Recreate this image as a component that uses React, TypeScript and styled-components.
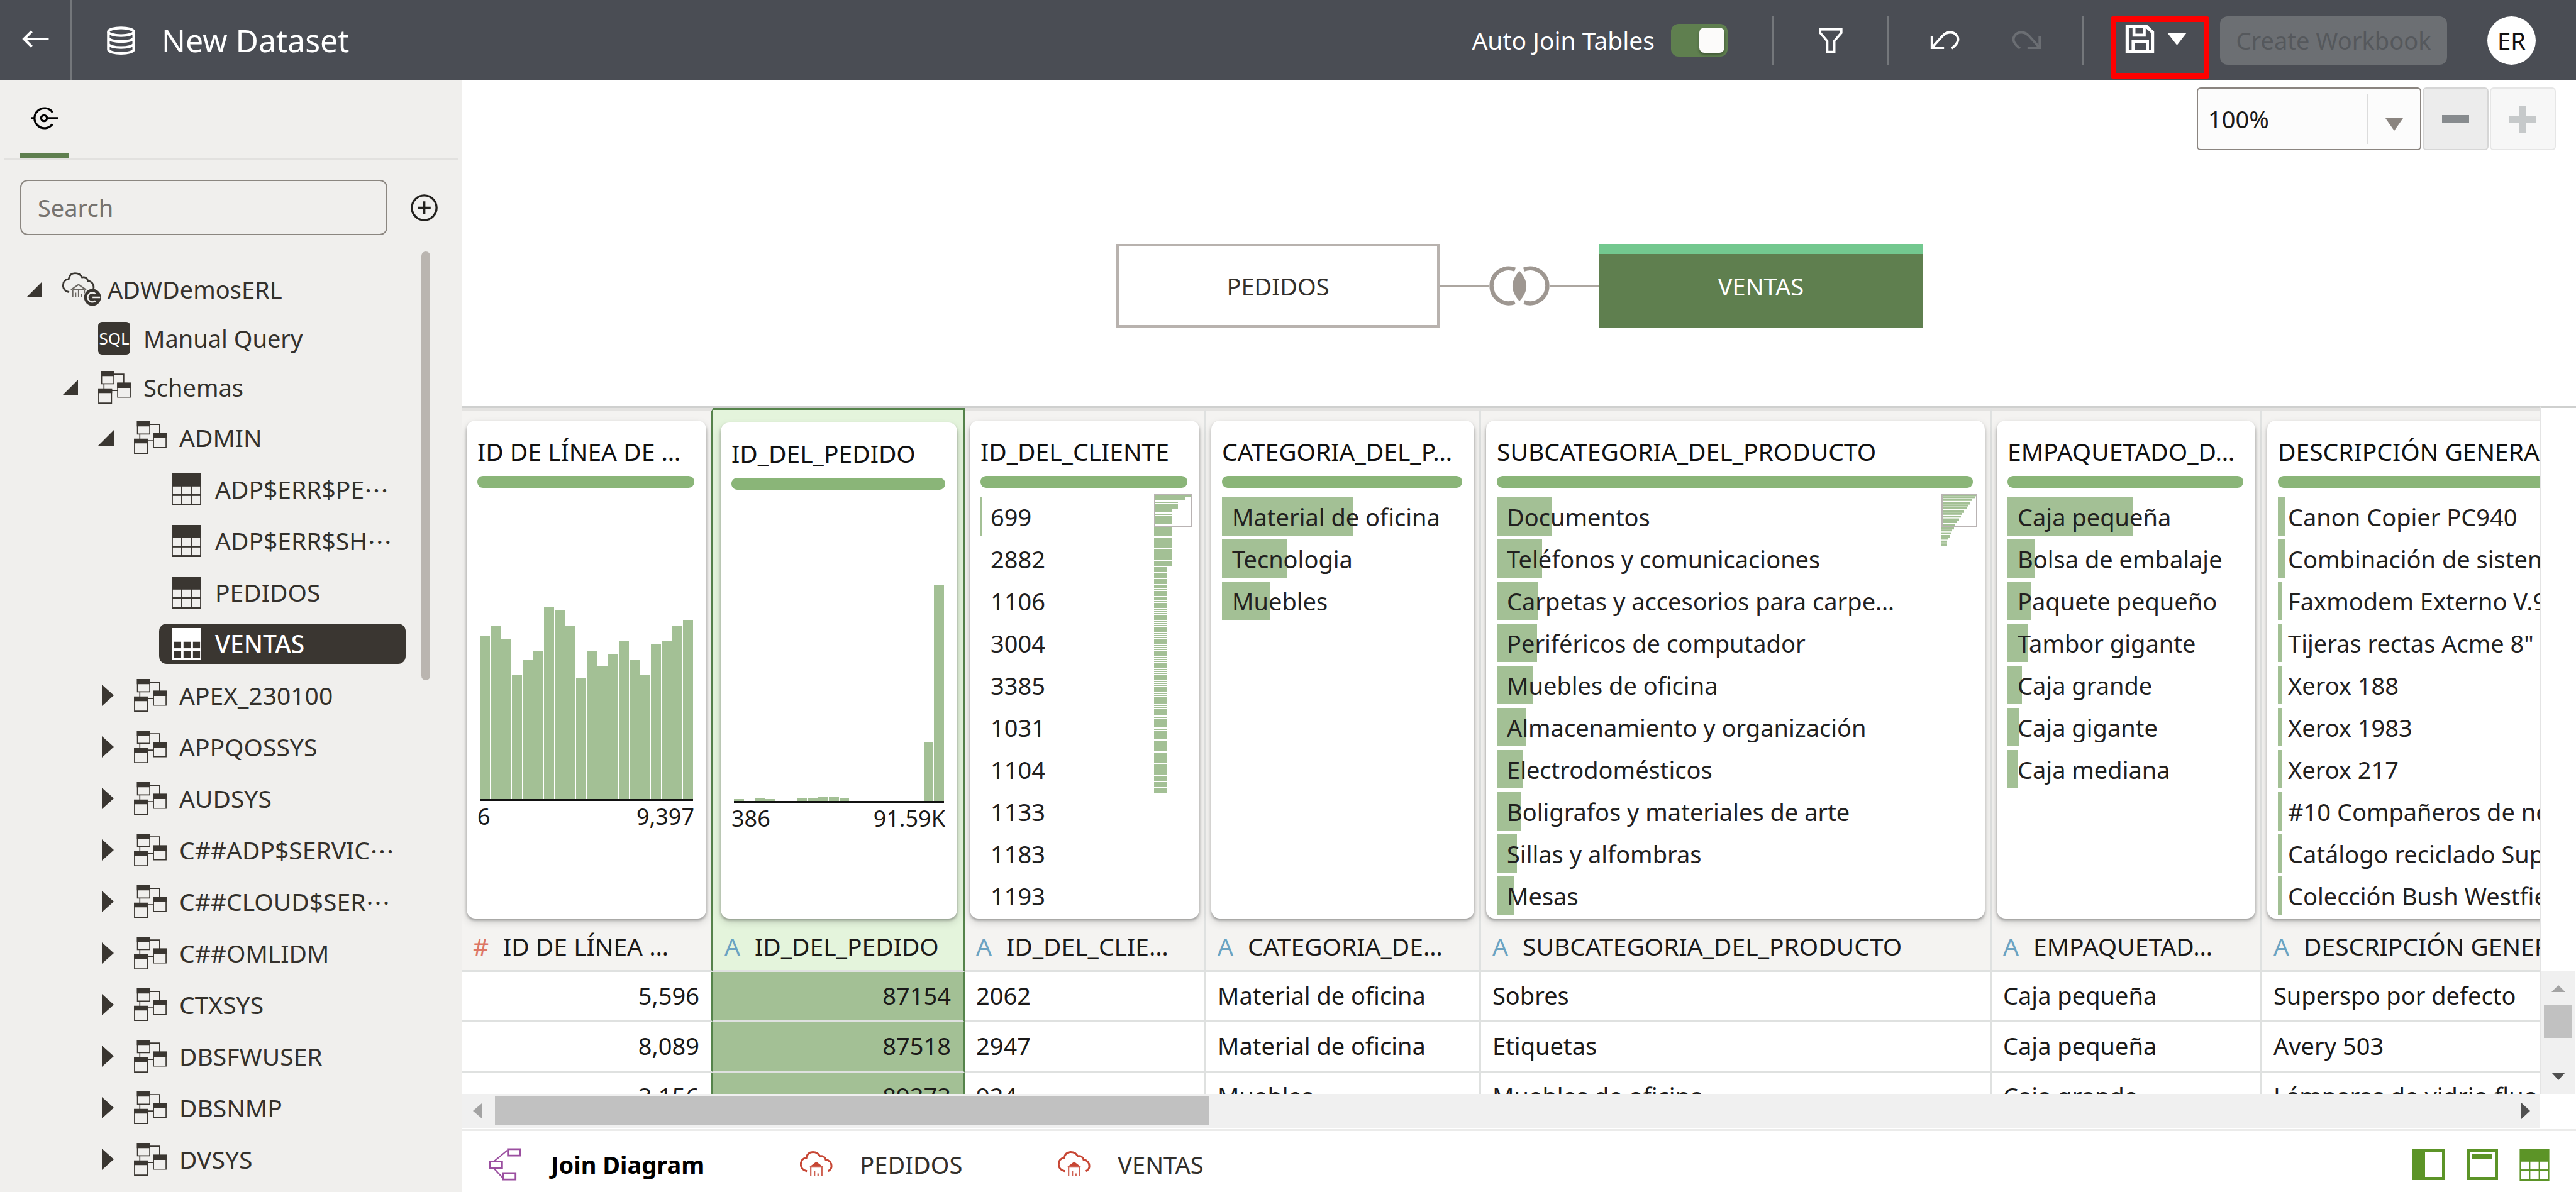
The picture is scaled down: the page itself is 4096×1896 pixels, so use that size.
import React from "react";
import styled, { createGlobalStyle, css } from "styled-components";

const GlobalStyle = createGlobalStyle`
  *, *::before, *::after { box-sizing: border-box; }
  body { margin: 0; font-family: "Noto Sans", "Open Sans", sans-serif; font-size: 38px; line-height: 52px; color: #1b1a19; background: #fff; }
  button, input, select { font: inherit; color: inherit; margin: 0; }
  button { border: 0; padding: 0; background: none; cursor: pointer; }
  ul, h1, h2 { margin: 0; padding: 0; list-style: none; font-weight: 400; }
  svg { display: block; flex: none; }
`;

const Shell = styled.div`
  display: flex;
  flex-direction: column;
  height: 100vh;
  overflow: hidden;
`;

/* ---------- top bar ---------- */

const TopBar = styled.header`
  display: flex;
  align-items: center;
  flex: none;
  height: 128px;
  padding-right: 64px;
  color: #fff;
  background: #4a4d54;
`;

const BackButton = styled.button`
  display: flex;
  align-items: center;
  justify-content: center;
  align-self: stretch;
  width: 114px;
  padding-bottom: 4px;
  border-right: 2px solid #74777b;
`;

const PageTitle = styled.h1`
  display: flex;
  align-items: center;
  gap: 42px;
  margin-right: auto;
  padding-left: 56px;
  font-size: 50px;
  line-height: 70px;
`;

const ToggleLabel = styled.label`
  display: flex;
  align-items: center;
  gap: 26px;
  margin-right: 71px;
  font-size: 39px;
`;

const Toggle = styled.input`
  appearance: none;
  display: flex;
  align-items: center;
  justify-content: flex-end;
  width: 90px;
  height: 52px;
  padding: 0 5px;
  border-radius: 12px;
  background: #5f7f4f;
  &::after {
    content: "";
    width: 40px;
    height: 40px;
    border-radius: 8px;
    background: #fcfbfa;
    box-shadow: 0 3px 4px rgba(0, 0, 0, 0.35);
  }
`;

const Divider = styled.span`
  width: 3px;
  height: 77px;
  background: #74777b;
`;

const BarTools = styled.div`
  display: flex;
  align-items: center;
  justify-content: center;
  gap: 81px;
  width: ${(p: { $wide?: boolean }) => (p.$wide ? 308 : 179)}px;
  height: 77px;
`;

const SaveButton = styled.button`
  position: relative;
  display: flex;
  align-items: center;
  gap: 20px;
  width: 157px;
  height: 77px;
  margin: 0 17px 0 42px;
  padding: 0 0 4px 23px;
  &::after {
    content: "";
    position: absolute;
    inset: 0 0 -22px;
    border: 9px solid #f00;
    border-radius: 4px;
  }
`;

const CreateButton = styled.button`
  width: 361px;
  height: 77px;
  margin-right: 64px;
  border-radius: 12px;
  color: #55585c;
  background: #6c6f73;
`;

const Avatar = styled.button`
  width: 77px;
  height: 77px;
  border-radius: 50%;
  color: #111;
  background: #fff;
`;

/* ---------- sidebar ---------- */

const Body = styled.div`
  display: flex;
  flex: 1;
  min-height: 0;
`;

const Sidebar = styled.aside`
  flex: none;
  width: 734px;
  overflow: hidden;
  background: #f0efed;
`;

const SideTabs = styled.nav`
  height: 126px;
  margin: 0 6px;
  padding-left: 26px;
  border-bottom: 2px solid #e2e1df;
`;

const SideTab = styled.button`
  display: flex;
  align-items: center;
  justify-content: center;
  width: 77px;
  height: 124px;
  padding-top: 4px;
  border-bottom: 9px solid #5f7f4f;
`;

const SearchRow = styled.div`
  display: flex;
  align-items: center;
  gap: 37px;
  padding: 32px 38px 0 32px;
`;

const SearchBox = styled.input`
  flex: 1;
  min-width: 0;
  height: 88px;
  padding: 0 26px;
  border: 2px solid #8b8680;
  border-radius: 12px;
  outline: 0;
  background: transparent;
  &::placeholder { color: #76736f; opacity: 1; }
`;

const TreeArea = styled.div`
  display: flex;
  justify-content: space-between;
  padding: 26px 50px 0 0;
`;

const Tree = styled.ul`
  flex: 1;
  padding-top: 21px;
`;

const TreeRow = styled.li<{ $level: number }>`
  display: flex;
  align-items: center;
  height: ${(p) => (p.$level < 2 ? 78 : 82)}px;
  padding-left: ${(p) => 42 + 57 * p.$level}px;
  color: #34312c;
  font-size: ${(p) => (p.$level < 2 ? 38 : 39)}px;
  white-space: nowrap;
`;

const CaretSlot = styled.span<{ $open?: boolean }>`
  display: flex;
  flex: none;
  width: 57px;
  padding-left: ${(p) => (p.$open ? 0 : 6)}px;
`;

const TreeItem = styled.span<{ $selected?: boolean }>`
  display: flex;
  align-items: center;
  ${(p) =>
    p.$selected &&
    css`
      width: 392px;
      height: 64px;
      margin-left: -17px;
      padding-left: 17px;
      border-radius: 12px;
      color: #fff;
      background: #3a3631;
      font-weight: 500;
    `}
`;

const IconSlot = styled.span<{ $inset?: boolean }>`
  flex: none;
  width: 72px;
  padding-left: ${(p) => (p.$inset ? 3 : 0)}px;
`;

const SqlBadge = styled.span`
  display: block;
  width: 51px;
  height: 52px;
  border-radius: 6px;
  color: #fff;
  background: #3a3631;
  font-size: 26px;
  line-height: 52px;
  text-align: center;
`;

const MidDots = styled.span`
  font-family: "Noto Sans CJK JP", sans-serif;
`;

const TreeScroll = styled.div`
  width: 14px;
  height: 682px;
  border-radius: 7px;
  background: #bab5b0;
`;

/* ---------- canvas ---------- */

const Main = styled.main`
  display: flex;
  flex: 1;
  flex-direction: column;
  min-width: 0;
`;

const Canvas = styled.section`
  flex: none;
  padding: 11px 32px 125px 0;
`;

const ZoomBar = styled.div`
  display: flex;
  justify-content: flex-end;
  gap: 2px;
  margin-bottom: 149px;
`;

const ZoomCombo = styled.div`
  position: relative;
  width: 357px;
`;

const ZoomSelect = styled.select`
  appearance: none;
  width: 100%;
  height: 100px;
  padding: 0 16px;
  border: 2px solid #8b8580;
  border-radius: 6px;
  background: #fcfcfc;
`;

const ComboArrow = styled.span`
  position: absolute;
  top: 10px;
  right: 2px;
  display: flex;
  align-items: center;
  justify-content: center;
  width: 84px;
  height: 80px;
  padding-top: 18px;
  border-left: 2px solid #dcdcdc;
  pointer-events: none;
`;

const ZoomButton = styled.button`
  display: flex;
  align-items: center;
  justify-content: center;
  width: 105px;
  height: 100px;
  border: 2px solid #d6d6d6;
  border-radius: 6px;
  color: #878b8e;
  background: #ececec;
  &:disabled { border-color: #e6e6e6; color: #c6c9ca; background: #f7f7f7; }
`;

const Diagram = styled.div`
  display: flex;
  align-items: center;
  justify-content: center;
  padding-left: 34px;
`;

const TableNode = styled.button<{ $active?: boolean }>`
  width: 514px;
  height: 133px;
  border: 4px solid #b8b2ae;
  color: #33302c;
  background: #fff;
  ${(p) =>
    p.$active &&
    css`
      padding-bottom: 16px;
      border: 0;
      border-top: 16px solid #73c88f;
      color: #fff;
      background: #5f7f4f;
    `}
`;

const Wire = styled.span`
  width: 79px;
  height: 4px;
  background: #aca6a0;
`;

/* ---------- data grid ---------- */

const GridArea = styled.section`
  display: flex;
  flex: 1;
  min-height: 0;
`;

const GridClip = styled.div`
  flex: 1;
  min-width: 0;
  overflow: hidden;
  border-top: 3px solid #cfd0cf;
`;

const DataTable = styled.table`
  table-layout: fixed;
  width: 3762px;
  border-spacing: 0;
`;

const colEdge = css<{ $selected?: boolean; $edge?: string }>`
  border-right: 3px solid ${(p) => (p.$edge === "green" ? "#55834b" : "#dfe1e0")};
`;

const CardCell = styled.td<{ $selected?: boolean; $edge?: string }>`
  height: 822px;
  padding: ${(p) => (p.$selected ? "20px 9px 0 12px" : "15px 8px 0 8px")};
  vertical-align: top;
  border-top: ${(p) => (p.$selected ? "3px solid #55834b" : "5px solid #e3e2e0")};
  background: ${(p) => (p.$selected ? "#e4f4dc" : "#f4f3f1")};
  ${colEdge}
`;

const Card = styled.article<{ $selected?: boolean }>`
  position: relative;
  height: ${(p) => (p.$selected ? 789 : 792)}px;
  padding: 23px 19px 0 17px;
  border-radius: 14px;
  background: #fff;
  box-shadow: 0 3px 4px rgba(0, 0, 0, 0.3), 0 6px 14px rgba(0, 0, 0, 0.14);
`;

const CardTitle = styled.h2`
  font-size: 39px;
  line-height: 52px;
  white-space: nowrap;
  overflow: hidden;
  color: #111;
`;

const QualityBar = styled.div`
  height: 19px;
  margin-top: 13px;
  border-radius: 9px;
  background: #8ab578;
`;

const ValueList = styled.ul`
  display: grid;
  grid-auto-rows: 61px;
  gap: 6px;
  margin-top: 15px;
`;

const Value = styled.li`
  position: relative;
  display: flex;
  align-items: center;
  padding-left: 16px;
  color: #22211f;
  white-space: nowrap;
`;

const ValueBar = styled.span`
  position: absolute;
  top: 0;
  bottom: 0;
  left: 0;
  background: #a3c095;
`;

const ValueText = styled.span`
  position: relative;
`;

const MiniMap = styled.div`
  position: absolute;
  top: 116px;
  right: 12px;
`;

const Histogram = styled.div<{ $selected?: boolean }>`
  display: flex;
  align-items: flex-end;
  gap: 1px;
  height: 498px;
  margin: 0 2px 0 4px;
  border-bottom: 3px solid #111;
`;

const HistBar = styled.span`
  flex: 1;
  background: #a3c095;
`;

const HistLabels = styled.div`
  display: flex;
  justify-content: space-between;
  font-size: 36px;
  line-height: 50px;
`;

const HeadCell = styled.th<{ $selected?: boolean; $edge?: string }>`
  height: 75px;
  padding: 0 0 5px 18px;
  text-align: left;
  font-size: 39px;
  font-weight: 400;
  white-space: nowrap;
  overflow: hidden;
  border-bottom: 3px solid #dfe1e0;
  background: ${(p) => (p.$selected ? "#e4f4dc" : "#f4f3f1")};
  ${colEdge}
`;

const HeadLabel = styled.span`
  display: flex;
`;

const TypeMark = styled.span<{ $number?: boolean }>`
  width: 48px;
  color: ${(p) => (p.$number ? "#dd7665" : "#6ba3c2")};
`;

const Cell = styled.td<{ $selected?: boolean; $edge?: string; $right?: boolean }>`
  height: 80px;
  padding: 0 19px 3px 18px;
  text-align: ${(p) => (p.$right ? "right" : "left")};
  white-space: nowrap;
  overflow: hidden;
  border-bottom: 3px solid #dfe1e0;
  background: ${(p) => (p.$selected ? "#a3c095" : "#fff")};
  ${colEdge}
`;

const VerticalRail = styled.div`
  display: flex;
  flex: none;
  flex-direction: column;
  width: 57px;
  padding-top: 896px;
  border-top: 3px solid #cfd0cf;
  border-left: 2px solid #e4e4e4;
`;

const VerticalTrack = styled.div`
  display: flex;
  flex: 1;
  flex-direction: column;
  align-items: center;
  justify-content: space-between;
  margin-right: 2px;
  padding: 22px 0;
  background: #f0f0f0;
`;

const VerticalThumb = styled.div`
  width: 45px;
  height: 53px;
  margin-bottom: 36px;
  background: #c1c1c1;
`;

const HorizontalTrack = styled.div`
  display: flex;
  flex: none;
  align-items: center;
  height: 54px;
  margin-right: 57px;
  padding: 0 16px 0 18px;
  background: #f0f0f0;
`;

const HorizontalThumb = styled.div`
  width: 1135px;
  height: 46px;
  margin: 0 auto 0 21px;
  background: #c1c1c1;
`;

/* ---------- footer ---------- */

const Footer = styled.footer`
  display: flex;
  align-items: center;
  flex: none;
  height: 102px;
  padding: 14px 42px 0 43px;
  background: linear-gradient(#ebebea, #ebebea) 0 2px / 100% 3px no-repeat #fff;
`;

const FooterTab = styled.button<{ $active?: boolean }>`
  display: flex;
  align-items: center;
  gap: ${(p) => (p.$active ? 47 : 43)}px;
  margin-right: 152px;
  color: ${(p) => (p.$active ? "#000" : "#33302c")};
  font-weight: ${(p) => (p.$active ? 700 : 400)};
`;

const ViewButtons = styled.div`
  display: flex;
  gap: 34px;
  margin-left: auto;
`;

/* ---------- icons ---------- */

const BackIcon = () => (
  <svg width="44" height="28" viewBox="0 0 46 30" fill="none" stroke="#fff" strokeWidth="4.5">
    <path d="M46 15H4M17 2 4 15 17 28" />
  </svg>
);

const DatabaseIcon = () => (
  <svg width="45" height="45" viewBox="0 0 48 48" fill="none" stroke="#fff" strokeWidth="4.5">
    <ellipse cx="24" cy="9" rx="21.5" ry="6.5" />
    <path d="M2.5 9v30c0 9 43 9 43 0V9M2.5 19c0 9 43 9 43 0M2.5 29c0 9 43 9 43 0" />
  </svg>
);

const FunnelIcon = () => (
  <svg width="38" height="42" viewBox="0 0 40 45" fill="none" stroke="#fff" strokeWidth="4">
    <path d="M2 3.5h36V10L26 24v18.500H14V24L2 10Z" />
    <path d="M2 3.500h36" strokeWidth="5" />
  </svg>
);

const UndoIcon = ({ color = "#fff", flip = false }) => (
  <svg width="48" height="30" viewBox="0 0 52 32" fill="none" stroke={color} strokeWidth="4.2">
    <g transform={flip ? "translate(52 0) scale(-1 1)" : undefined}>
      <path d="M3 9v20h21" />
      <path d="M4 28 21 9C28 1 40 0 46 8c5 7 1 15-9 22" />
    </g>
  </svg>
);

const SaveIcon = () => (
  <svg width="47" height="44" viewBox="0 0 49 47" fill="none" stroke="#fff">
    <path d="M3 2.500h33L46 12v32.500H3Z" strokeWidth="5.500" />
    <path d="M14.500 4v13H32V4" strokeWidth="5" />
    <path d="M13 44V27.500h24.500V44" strokeWidth="5" />
  </svg>
);

const DownIcon = ({ color = "#fff", width = 31 }) => (
  <svg width={width} height="20" viewBox="0 0 32 20" preserveAspectRatio="none">
    <path d="M0 0h32L16 20Z" fill={color} />
  </svg>
);

const ConnectIcon = () => (
  <svg width="43" height="36" viewBox="0 0 46 38" fill="none" stroke="#000" strokeWidth="3.600">
    <path d="M37 9A17 17 0 1 0 37 29" />
    <circle cx="22.500" cy="19" r="5" />
    <path d="M28 19h18M0 19h6" strokeWidth="4" />
  </svg>
);

const AddIcon = () => (
  <svg width="43" height="43" viewBox="0 0 46 46" fill="none" stroke="#22201d">
    <circle cx="23" cy="23" r="21" strokeWidth="3.600" />
    <path d="M23 12v22M12 23h22" strokeWidth="4" />
  </svg>
);

const OpenCaret = () => (
  <svg width="25" height="25" viewBox="0 0 25 25">
    <path d="M25 0v25H0Z" fill="#3a3631" />
  </svg>
);

const ClosedCaret = () => (
  <svg width="19" height="34" viewBox="0 0 19 34">
    <path d="M0 0 19 17 0 34Z" fill="#3a3631" />
  </svg>
);

const cloudPath =
  "M12 34C5 33 1 28 1.500 22 1.500 16 5 12 11 11.500 12 5 16 1.500 22 1.500c6 0 10 3 12 7 5-1 9 1 10 6 6 1 10 5 10 11 0 4-2 7-6 8.500";

const WarehouseCloud = () => (
  <svg width="62" height="54" viewBox="0 0 67 58" fill="none">
    <path d={cloudPath} stroke="#3a3631" strokeWidth="3" />
    <path d="M15 30 28 21l13 9" stroke="#6b6762" strokeWidth="2.500" />
    <path d="M18 43V30M23 43v-8M28 43v-12M33 43v-6M38 36v-6M18 29h20" stroke="#6b6762" strokeWidth="2.200" />
    <circle cx="52" cy="43" r="14.500" fill="#3a3631" />
    <path d="M57 37a8 8 0 1 0 0 12M52 43h13" stroke="#f0efed" strokeWidth="2.600" />
  </svg>
);

const RedCloud = () => (
  <svg width="52" height="42" viewBox="0 0 56 45" fill="none">
    <path d={cloudPath} stroke="#c74634" strokeWidth="3.200" />
    <path d="M15 28 28 18l13 10Z" fill="#c74634" />
    <path d="M18.500 43V27h19v16M25 43v-9M31 43v-5" stroke="#cf6152" strokeWidth="2.400" />
  </svg>
);

const SchemaIcon = () => (
  <svg width="52" height="52" viewBox="0 0 56 56" fill="none" stroke="#3a3631" strokeWidth="1.800">
    <path d="M6 1h21v21H6ZM33.500 21H55v24H33.500ZM1 31h22v24H1ZM27 5.500h17V21M10 22v9M23 33.500h11" />
    <path d="M5 0h23v9H5ZM32.500 20H56v9H32.500ZM0 30h24v8H0Z" fill="#3a3631" stroke="none" />
  </svg>
);

const TableIcon = ({ ink = "#3a3631", paper = "#f0efed", width = 47, cells = 0 }) => (
  <svg width={width} height="51" viewBox="0 0 50 54">
    <path d="M0 0h50v54H0Z" fill={ink} />
    {[2, 18, 34].map((x) =>
      [22, 38].map((y) => (
        <rect key={x + "-" + y} x={x + cells} y={y + cells / 2} width={14 - cells} height={13 - cells} fill={paper} />
      ))
    )}
  </svg>
);

const VennIcon = () => (
  <svg width="96" height="63" viewBox="0 0 104 67" fill="none" stroke="#9e9791" strokeWidth="7">
    <path d="M44.500 5.500A30 30 0 1 0 44 61.800" />
    <path d="M59.500 5.500A30 30 0 1 1 60 61.800" />
    <path d="M52 8C68 25 68 43 52 60 36 43 36 25 52 8Z" fill="#9e9791" stroke="none" />
  </svg>
);

const JoinIcon = () => (
  <svg width="52" height="53" viewBox="0 0 56 57" fill="none" stroke="#9b4fa0" strokeWidth="3">
    <path d="M33 2h21v11H33ZM2 23h21v11H2ZM25 43h21v11H25Z" />
    <path d="M9 23 32 4M8 34l17 18" strokeWidth="2.400" />
  </svg>
);

const LeftPaneIcon = () => (
  <svg width="52" height="50" viewBox="0 0 52 50">
    <path d="M0 0h52v50H0Z" fill="#5c9427" />
    <path d="M20 5h27v40H20Z" fill="#fff" />
  </svg>
);

const TopPaneIcon = () => (
  <svg width="50" height="50" viewBox="0 0 50 50">
    <path d="M0 0h50v50H0Z" fill="#5c9427" />
    <path d="M5 5h40v40H5Z" fill="#fff" />
    <path d="M9 9h32v8H9Z" fill="#5c9427" />
  </svg>
);

const ArrowHead = ({ d, w, h, color }: { d: string; w: number; h: number; color: string }) => (
  <svg width={w} height={h} viewBox={`0 0 ${w} ${h}`}>
    <path d={d} fill={color} />
  </svg>
);

const green = "#a3c095";

const ClientMiniMap = () => {
  const stripes = [];
  for (let y = 22; y < 478; y += 19) {
    const w = y < 110 ? 29 : 21;
    stripes.push(`M0 ${y}h${w}v8H0ZM0 ${y + 10}h${w}v2H0ZM0 ${y + 13}h${w}v2H0ZM0 ${y + 16}h${w}v2H0Z`);
  }
  return (
    <svg width="60" height="482" viewBox="0 0 60 482">
      <path d="M0 0h58v6H49v5H0ZM0 13h38v2H0ZM0 16h38v2H0ZM0 19h38v6H0Z" fill={green} />
      <path d={stripes.join("")} fill={green} />
      <rect x="1" y="1" width="58" height="52" fill="none" stroke="#b9b3b3" strokeWidth="2" />
    </svg>
  );
};

const SubcategoryMiniMap = () => {
  const widths = [56, 54, 48, 46, 43, 40, 36, 33, 31, 28, 25, 22, 20, 17, 15, 13, 11, 9, 9];
  return (
    <svg width="57" height="84" viewBox="0 0 57 84">
      {widths.map((w, i) => (
        <rect key={i} x="0" y={i * 4.4} width={w} height={i % 3 === 0 ? 4.4 : 3} fill={green} />
      ))}
      <rect x="1" y="1" width="55" height="52" fill="none" stroke="#b9b3b3" strokeWidth="2" />
    </svg>
  );
};

/* ---------- data ---------- */

type Kind = "cloud" | "sql" | "schema" | "table";
type Node = { level: number; kind: Kind; text: string; open?: boolean; cut?: boolean; selected?: boolean };

const tree: Node[] = [
  { level: 0, kind: "cloud", text: "ADWDemosERL", open: true },
  { level: 1, kind: "sql", text: "Manual Query" },
  { level: 1, kind: "schema", text: "Schemas", open: true },
  { level: 2, kind: "schema", text: "ADMIN", open: true },
  { level: 3, kind: "table", text: "ADP$ERR$PE", cut: true },
  { level: 3, kind: "table", text: "ADP$ERR$SH", cut: true },
  { level: 3, kind: "table", text: "PEDIDOS" },
  { level: 3, kind: "table", text: "VENTAS", selected: true },
  { level: 2, kind: "schema", text: "APEX_230100" },
  { level: 2, kind: "schema", text: "APPQOSSYS" },
  { level: 2, kind: "schema", text: "AUDSYS" },
  { level: 2, kind: "schema", text: "C##ADP$SERVIC", cut: true },
  { level: 2, kind: "schema", text: "C##CLOUD$SER", cut: true },
  { level: 2, kind: "schema", text: "C##OMLIDM" },
  { level: 2, kind: "schema", text: "CTXSYS" },
  { level: 2, kind: "schema", text: "DBSFWUSER" },
  { level: 2, kind: "schema", text: "DBSNMP" },
  { level: 2, kind: "schema", text: "DVSYS" },
];

type Column = {
  width: number;
  title: string;
  head: string;
  number?: boolean;
  right?: boolean;
  selected?: boolean;
  edge?: string;
  values?: [string, number][];
  bars?: number[];
  range?: [string, string];
  map?: React.ReactNode;
  rows: string[];
};

const columns: Column[] = [
  {
    width: 400, title: "ID DE LÍNEA DE …", head: "ID DE LÍNEA …", number: true, right: true, edge: "green",
    bars: [260, 275, 255, 197, 221, 236, 305, 300, 275, 192, 236, 211, 231, 251, 221, 197, 246, 251, 275, 285],
    range: ["6", "9,397"], rows: ["5,596", "8,089", "3,156"],
  },
  {
    width: 400, title: "ID_DEL_PEDIDO", head: "ID_DEL_PEDIDO", right: true, selected: true, edge: "green",
    bars: [3, 0, 5, 3, 0, 0, 4, 5, 6, 7, 4, 0, 0, 0, 0, 0, 0, 0, 94, 344],
    range: ["386", "91.59K"], rows: ["87154", "87518", "89373"],
  },
  {
    width: 384, title: "ID_DEL_CLIENTE", head: "ID_DEL_CLIE…", map: <ClientMiniMap />,
    values: [["699", 2], ["2882", 0], ["1106", 0], ["3004", 0], ["3385", 0], ["1031", 0], ["1104", 0], ["1133", 0], ["1183", 0], ["1193", 0]],
    rows: ["2062", "2947", "924"],
  },
  {
    width: 437, title: "CATEGORIA_DEL_P…", head: "CATEGORIA_DE…",
    values: [["Material de oficina", 208], ["Tecnologia", 103], ["Muebles", 77]],
    rows: ["Material de oficina", "Material de oficina", "Muebles"],
  },
  {
    width: 812, title: "SUBCATEGORIA_DEL_PRODUCTO", head: "SUBCATEGORIA_DEL_PRODUCTO", map: <SubcategoryMiniMap />,
    values: [
      ["Documentos", 88], ["Teléfonos y comunicaciones", 72], ["Carpetas y accesorios para carpe…", 66],
      ["Periféricos de computador", 64], ["Muebles de oficina", 58], ["Almacenamiento y organización", 47],
      ["Electrodomésticos", 41], ["Boligrafos y materiales de arte", 38], ["Sillas y alfombras", 32], ["Mesas", 28],
    ],
    rows: ["Sobres", "Etiquetas", "Muebles de oficina"],
  },
  {
    width: 430, title: "EMPAQUETADO_D…", head: "EMPAQUETAD…",
    values: [
      ["Caja pequeña", 200], ["Bolsa de embalaje", 44], ["Paquete pequeño", 38], ["Tambor gigante", 32],
      ["Caja grande", 23], ["Caja gigante", 19], ["Caja mediana", 17],
    ],
    rows: ["Caja pequeña", "Caja pequeña", "Caja grande"],
  },
  {
    width: 899, title: "DESCRIPCIÓN GENERAL", head: "DESCRIPCIÓN GENERAL",
    values: [
      ["Canon Copier PC940", 11], ["Combinación de sistemas", 11], ["Faxmodem Externo V.90", 7],
      ['Tijeras rectas Acme 8"', 7], ["Xerox 188", 7], ["Xerox 1983", 7], ["Xerox 217", 7],
      ["#10 Compañeros de notas", 7], ["Catálogo reciclado Super", 7], ["Colección Bush Westfield", 7],
    ],
    rows: ["Superspo por defecto", "Avery 503", "Lámparas de vidrio fluorescente"],
  },
];

const NodeIcon = ({ node }: { node: Node }) => {
  if (node.kind === "cloud") return <WarehouseCloud />;
  if (node.kind === "sql") return <SqlBadge>SQL</SqlBadge>;
  if (node.kind === "schema") return <SchemaIcon />;
  return node.selected ? <TableIcon ink="#fff" paper="#3a3631" cells={2} /> : <TableIcon />;
};

const ColumnCard = ({ column }: { column: Column }) => (
  <Card $selected={column.selected}>
    <CardTitle>{column.title}</CardTitle>
    <QualityBar />
    {column.bars && (
      <>
        <Histogram>
          {column.bars.map((h, i) => (
            <HistBar key={i} style={{ height: h }} />
          ))}
        </Histogram>
        <HistLabels>
          <span>{column.range![0]}</span>
          <span>{column.range![1]}</span>
        </HistLabels>
      </>
    )}
    {column.values && (
      <ValueList>
        {column.values.map(([text, w]) => (
          <Value key={text}>
            <ValueBar style={{ width: w }} />
            <ValueText>{text}</ValueText>
          </Value>
        ))}
      </ValueList>
    )}
    {column.map && <MiniMap>{column.map}</MiniMap>}
  </Card>
);

export default function App() {
  return (
    <Shell>
      <GlobalStyle />
      <TopBar>
        <BackButton aria-label="Back"><BackIcon /></BackButton>
        <PageTitle><DatabaseIcon />New Dataset</PageTitle>
        <ToggleLabel>
          Auto Join Tables
          <Toggle type="checkbox" defaultChecked />
        </ToggleLabel>
        <Divider />
        <BarTools>
          <button aria-label="Filter"><FunnelIcon /></button>
        </BarTools>
        <Divider />
        <BarTools $wide>
          <button aria-label="Undo"><UndoIcon /></button>
          <button aria-label="Redo" disabled><UndoIcon color="#6b6e73" flip /></button>
        </BarTools>
        <Divider />
        <SaveButton aria-label="Save"><SaveIcon /><DownIcon /></SaveButton>
        <CreateButton disabled>Create Workbook</CreateButton>
        <Avatar>ER</Avatar>
      </TopBar>
      <Body>
        <Sidebar>
          <SideTabs>
            <SideTab aria-label="Connections"><ConnectIcon /></SideTab>
          </SideTabs>
          <SearchRow>
            <SearchBox type="text" placeholder="Search" aria-label="Search" />
            <button aria-label="Add"><AddIcon /></button>
          </SearchRow>
          <TreeArea>
            <Tree>
              {tree.map((node) => (
                <TreeRow key={node.text} $level={node.level}>
                  <CaretSlot $open={node.open}>
                    {node.open ? <OpenCaret /> : node.kind === "schema" ? <ClosedCaret /> : null}
                  </CaretSlot>
                  <TreeItem $selected={node.selected}>
                    <IconSlot $inset={node.kind === "table"}><NodeIcon node={node} /></IconSlot>
                    {node.text}
                    {node.cut && <MidDots>…</MidDots>}
                  </TreeItem>
                </TreeRow>
              ))}
            </Tree>
            <TreeScroll />
          </TreeArea>
        </Sidebar>
        <Main>
          <Canvas>
            <ZoomBar>
              <ZoomCombo>
                <ZoomSelect aria-label="Zoom" defaultValue="100%">
                  <option>100%</option>
                </ZoomSelect>
                <ComboArrow><DownIcon color="#8b8580" width={28} /></ComboArrow>
              </ZoomCombo>
              <ZoomButton aria-label="Zoom out">
                <svg width="43" height="43" viewBox="0 0 43 43"><path d="M0 15h43v12H0Z" fill="currentColor" /></svg>
              </ZoomButton>
              <ZoomButton aria-label="Zoom in" disabled>
                <svg width="43" height="43" viewBox="0 0 43 43"><path d="M16 0h11v16h16v11H27v16H16V27H0V16h16Z" fill="currentColor" /></svg>
              </ZoomButton>
            </ZoomBar>
            <Diagram>
              <TableNode>PEDIDOS</TableNode>
              <Wire />
              <VennIcon />
              <Wire />
              <TableNode $active>VENTAS</TableNode>
            </Diagram>
          </Canvas>
          <GridArea>
            <GridClip>
              <DataTable>
                <colgroup>
                  {columns.map((c) => <col key={c.head} style={{ width: c.width }} />)}
                </colgroup>
                <thead>
                  <tr>
                    {columns.map((c) => (
                      <CardCell key={c.head} $selected={c.selected} $edge={c.edge}>
                        <ColumnCard column={c} />
                      </CardCell>
                    ))}
                  </tr>
                  <tr>
                    {columns.map((c) => (
                      <HeadCell key={c.head} scope="col" $selected={c.selected} $edge={c.edge}>
                        <HeadLabel>
                          <TypeMark $number={c.number}>{c.number ? "#" : "A"}</TypeMark>
                          {c.head}
                        </HeadLabel>
                      </HeadCell>
                    ))}
                  </tr>
                </thead>
                <tbody>
                  {[0, 1, 2].map((r) => (
                    <tr key={r}>
                      {columns.map((c) => (
                        <Cell key={c.head} $selected={c.selected} $edge={c.edge} $right={c.right}>{c.rows[r]}</Cell>
                      ))}
                    </tr>
                  ))}
                </tbody>
              </DataTable>
            </GridClip>
            <VerticalRail>
              <VerticalTrack>
                <ArrowHead w={22} h={11} d="M11 0 22 11H0Z" color="#a3a3a3" />
                <VerticalThumb />
                <ArrowHead w={22} h={12} d="M0 0h22L11 12Z" color="#505050" />
              </VerticalTrack>
            </VerticalRail>
          </GridArea>
          <HorizontalTrack>
            <ArrowHead w={14} h={24} d="M14 0v24L0 12Z" color="#a3a3a3" />
            <HorizontalThumb />
            <ArrowHead w={14} h={26} d="M0 0l14 13L0 26Z" color="#505050" />
          </HorizontalTrack>
          <Footer>
            <FooterTab $active><JoinIcon />Join Diagram</FooterTab>
            <FooterTab><RedCloud />PEDIDOS</FooterTab>
            <FooterTab><RedCloud />VENTAS</FooterTab>
            <ViewButtons>
              <button aria-label="Left pane"><LeftPaneIcon /></button>
              <button aria-label="Top pane"><TopPaneIcon /></button>
              <button aria-label="Table view"><TableIcon ink="#5c9427" paper="#fff" width={48} /></button>
            </ViewButtons>
          </Footer>
        </Main>
      </Body>
    </Shell>
  );
}
